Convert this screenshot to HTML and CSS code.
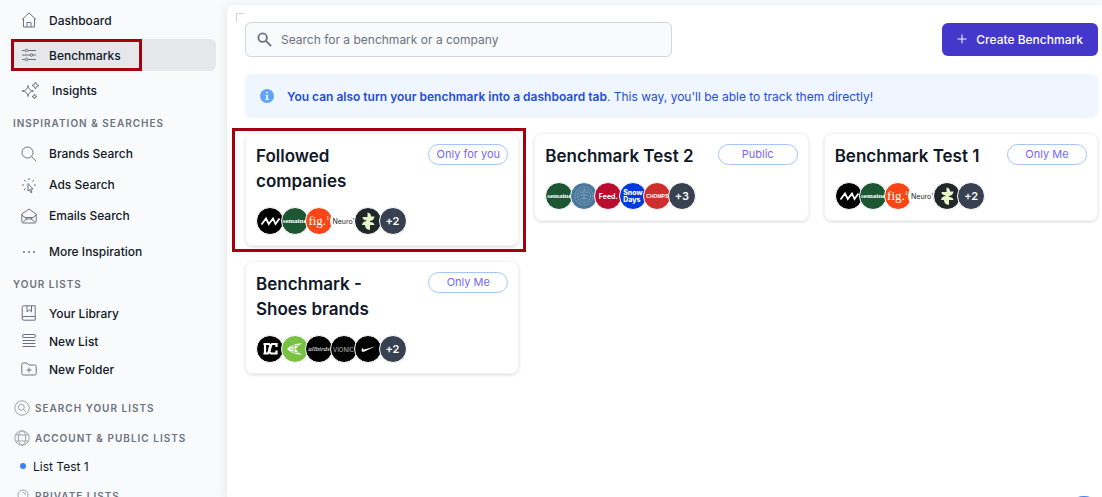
FILE: index.html
```html
<!DOCTYPE html>
<html lang="en">
<head>
  <meta charset="utf-8">
  <title>Benchmarks</title>
  <link rel="stylesheet" href="styles.css">
</head>
<body>
  <!-- shared logos -->
  <svg class="sprite" aria-hidden="true">
    <symbol id="logo-wave" viewBox="0 0 26 26">
      <path d="M4.500 16.500L9 10.500l2.800 5.500 4.200-5.500 2.500 5.500 4-5.500" fill="none" stroke="#fff" stroke-width="1.800"/>
    </symbol>
    <symbol id="logo-leaf" viewBox="0 0 26 26">
      <path d="M7.500 9h5V4.500q3.500.5 3.500 4h3.500q-.5 4-4.500 4.500v1q4 0 4.500 3H15V22q-5-.5-5-5H7q.5-3.500 4.500-4v-.5q-4-.5-4-3.500z" fill="#e6f5c9"/>
    </symbol>
  </svg>

  <div class="app">
    <nav class="sidebar">
      <div class="nav-group main-nav">
        <a href="#" class="nav-item">
          <svg class="icon" viewBox="0 0 16 16"><path d="M1 7.500L8 1l7 6.500M2.500 6.500V15h11V6.500M6 15v-4.500h4V15"/></svg>
          Dashboard
        </a>
        <a href="#" class="nav-item active">
          <svg class="icon" viewBox="0 0 16 16"><path d="M1 3.500h3M7 3.500h8M1 8h8M12 8h3M1 12.500h3M7 12.500h8"/><circle cx="5.500" cy="3.500" r="1.300"/><circle cx="10.500" cy="8" r="1.300"/><circle cx="5.500" cy="12.500" r="1.300"/></svg>
          Benchmarks
          <span class="marker"></span>
        </a>
        <a href="#" class="nav-item">
          <svg class="icon icon-wide" viewBox="0 0 19 19"><path d="M7 4.500Q7.500 9.500 12.500 10 7.500 10.500 7 15.500 6.500 10.500 1 10 6.500 9.500 7 4.500zM14.500 1q.3 3 3.500 3.500-3.200.5-3.500 3.500-.3-3-3.500-3.500 3.200-.5 3.500-3.500zM13.500 13q.2 2.300 2.500 2.500-2.300.2-2.500 2.500-.2-2.300-2.500-2.500 2.300-.2 2.500-2.500z"/></svg>
          Insights
        </a>
      </div>

      <h2 class="nav-title">Inspiration &amp; Searches</h2>
      <div class="nav-group medium">
        <a href="#" class="nav-item">
          <svg class="icon" viewBox="0 0 16 16"><circle cx="6.500" cy="6.500" r="5.500"/><path d="M10.500 10.500L15 15"/></svg>
          Brands Search
        </a>
        <a href="#" class="nav-item">
          <svg class="icon" viewBox="0 0 16 16"><path d="M8 1v2M3 3l1.500 1.500M13 3l-1.500 1.500M1 8h2M13 8h2M4.500 11.500L3 13M7 6.500l5 5.500-2.300.2 1.300 3-1.300.5-1.200-3L7 14z"/></svg>
          Ads Search
        </a>
        <a href="#" class="nav-item">
          <svg class="icon" viewBox="0 0 16 16"><path d="M.8 6L8 1l7.200 5v7.500q0 1.500-1.500 1.500H2.300Q.8 15 .8 13.500zM.8 7L6 11h4l5.200-4M6 11l-4 3M10 11l4 3M4 9.500h8"/></svg>
          Emails Search
        </a>
        <a href="#" class="nav-item more">
          <svg class="icon icon-dots" viewBox="0 0 16 16"><circle cx="3" cy="8" r="1"/><circle cx="8" cy="8" r="1"/><circle cx="13" cy="8" r="1"/></svg>
          More Inspiration
        </a>
      </div>

      <h2 class="nav-title">Your Lists</h2>
      <div class="nav-group compact">
        <a href="#" class="nav-item">
          <svg class="icon" viewBox="0 0 16 16"><path d="M3 .8h11.200v14.400H3q-1.800 0-1.800-1.700V2.500Q1.200.8 3 .8zM1.200 13.500Q1.200 11.500 3 11.500h11.200M6 .8v6l2.300-2 2.200 2v-6"/></svg>
          Your Library
        </a>
        <a href="#" class="nav-item">
          <svg class="icon" viewBox="0 0 16 16"><rect x="1.500" y="1.500" width="13" height="3" rx="1.500"/><path d="M1.500 7.500h13M1.500 10.500h13M1.500 13.500h13"/></svg>
          New List
        </a>
        <a href="#" class="nav-item">
          <svg class="icon" viewBox="0 0 16 16"><path d="M.8 3.500Q.8 2 2.300 2h3.500l2 2h5.900q1.500 0 1.500 1.500v7q0 1.500-1.500 1.500H2.300Q.8 14 .8 12.500zM8 6.500v5M5.500 9h5"/></svg>
          New Folder
        </a>
      </div>

      <div class="lists">
        <h2 class="list-title">
          <svg class="icon" viewBox="0 0 16 16"><circle cx="8" cy="8" r="7.200"/><circle cx="7.300" cy="7.300" r="3"/><path d="M9.500 9.500l2.500 2.500"/></svg>
          Search your lists
        </h2>
        <h2 class="list-title">
          <svg class="icon" viewBox="0 0 16 16"><circle cx="8" cy="8" r="7.200"/><ellipse cx="8" cy="8" rx="3.700" ry="7.200"/><path d="M1.500 5h13M1.500 11h13"/></svg>
          Account &amp; public lists
        </h2>
        <a href="#" class="list-link">List Test 1</a>
        <h2 class="list-title">
          <svg class="icon" viewBox="0 0 16 16"><circle cx="9" cy="7" r="5"/><path d="M9 4.500a2.500 2.500 0 0 1 2.500 2.500M5 11l-3 4"/></svg>
          Private lists
        </h2>
      </div>
    </nav>

    <main class="content">
      <span class="corner"></span>
      <div class="toolbar">
        <label class="search">
          <svg viewBox="0 0 16 16"><circle cx="6" cy="6" r="4.500"/><path d="M9.500 9.500L15 15"/></svg>
          <input type="text" placeholder="Search for a benchmark or a company" aria-label="Search for a benchmark or a company">
        </label>
        <button class="create">
          <svg viewBox="0 0 10 10"><path d="M5 .5v9M.5 5h9"/></svg>
          Create Benchmark
        </button>
      </div>

      <div class="notice">
        <svg viewBox="0 0 14 14"><circle cx="7" cy="7" r="7" fill="#60a5fa"/><path d="M6.200 3h1.800v1.600H6.200zM5.500 6H8v4h1v1H5.200v-1h1V7h-.7z" fill="#eff6ff"/></svg>
        <p><strong>You can also turn your benchmark into a dashboard tab</strong>. This way, you'll be able to track them directly!</p>
      </div>

      <div class="cards">
        <article class="card">
          <div class="card-head">
            <h3>Followed companies</h3>
            <span class="badge">Only for you</span>
          </div>
          <div class="brands">
            <span class="brand black"><svg><use href="#logo-wave"/></svg></span>
            <span class="brand semaine">semaine</span>
            <span class="brand fig">fig.<sup>1</sup></span>
            <span class="brand neuro">Neuro'</span>
            <span class="brand leaf"><svg><use href="#logo-leaf"/></svg></span>
            <span class="brand count">+2</span>
          </div>
          <span class="marker"></span>
        </article>

        <article class="card">
          <div class="card-head">
            <h3>Benchmark Test 2</h3>
            <span class="badge">Public</span>
          </div>
          <div class="brands">
            <span class="brand semaine">semaine</span>
            <span class="brand seal"><svg viewBox="0 0 26 26"><g fill="none" stroke="#a9c3d8"><circle cx="13" cy="13" r="9" stroke-width=".7" stroke-dasharray="1.500 1"/><circle cx="13" cy="13" r="6.500" stroke-width=".7" stroke-dasharray="2 1"/><path d="M9 10q4-3 8 0M8 13q5-3 10 0M9 16q4-3 8 0M13 8v10" stroke-width=".5"/></g></svg></span>
            <span class="brand feed">Feed.</span>
            <span class="brand snow">Snow<br>Days</span>
            <span class="brand chomps">CHOMPS</span>
            <span class="brand count">+3</span>
          </div>
        </article>

        <article class="card">
          <div class="card-head">
            <h3>Benchmark Test 1</h3>
            <span class="badge">Only Me</span>
          </div>
          <div class="brands">
            <span class="brand black"><svg><use href="#logo-wave"/></svg></span>
            <span class="brand semaine">semaine</span>
            <span class="brand fig">fig.<sup>1</sup></span>
            <span class="brand neuro">Neuro'</span>
            <span class="brand leaf"><svg><use href="#logo-leaf"/></svg></span>
            <span class="brand count">+2</span>
          </div>
        </article>

        <article class="card">
          <div class="card-head">
            <h3>Benchmark - Shoes brands</h3>
            <span class="badge">Only Me</span>
          </div>
          <div class="brands">
            <span class="brand black"><svg viewBox="0 0 26 26"><g fill="none" stroke="#fff" stroke-width="2.200"><path d="M6.500 8h5.500l1.500 1.500v2L11 17.500H6.500M8 8v9"/><path d="M19.500 11V8h-4.500L12.500 12v4l1.500 1.500h5.500v-3"/></g></svg></span>
            <span class="brand green"><svg viewBox="0 0 26 26"><path d="M5 13Q11 7 20 7.500 15 10 14 13q1 3 6 5.500Q11 19 5 13z" fill="#fff"/><path d="M8 13h7M9 10.500l8-1.500M9 15.500l8 1.500M12 8v10" stroke="#78c143" stroke-width=".8"/></svg></span>
            <span class="brand black allbirds">allbirds</span>
            <span class="brand black vionic">VIONIC</span>
            <span class="brand black"><svg viewBox="0 0 26 26"><path d="M20 10.500L10 15.300q-3.500 1.500-3.500-1 0-1.200 1.200-2.500-.2 2.200 2.300 1.500z" fill="#fff"/></svg></span>
            <span class="brand count">+2</span>
          </div>
        </article>
      </div>
    </main>
  </div>

  <button class="chat" aria-label="Open chat"></button>
</body>
</html>
```

FILE: styles.css
```css
* {
  box-sizing: border-box;
}

body {
  margin: 0;
  font-family: Inter, "Liberation Sans", sans-serif;
  font-size: 12px;
  color: #111827;
  background: #f9fafc;
}

h2, h3, p {
  margin: 0;
}

a {
  color: inherit;
  text-decoration: none;
}

.sprite {
  display: none;
}

.app {
  display: grid;
  grid-template-columns: 227px 1fr;
  height: 100vh;
  overflow: hidden;
}

/* sidebar */
.sidebar {
  padding: 4px 11px 0 13px;
  overflow: hidden;
}

.nav-group {
  display: flex;
  flex-direction: column;
}

.main-nav {
  gap: 3px;
}

.nav-item {
  position: relative;
  display: flex;
  align-items: center;
  gap: 12px;
  height: 32px;
  padding: 0 8px;
  border-radius: 6px;
  font-weight: 500;
}

.medium .nav-item {
  height: 31px;
}

.compact .nav-item {
  height: 28px;
}

.nav-item.active {
  background: #e5e7eb;
}

.nav-item.more {
  margin-top: 5px;
}

.icon {
  width: 16px;
  height: 16px;
  flex: none;
  fill: none;
  stroke: #6b7280;
}

.icon-wide {
  width: 19px;
  height: 19px;
}

.icon-dots {
  fill: #6b7280;
  stroke: none;
}

.nav-title, .list-title {
  font-size: 10px;
  font-weight: 600;
  letter-spacing: 1px;
  line-height: 16px;
  text-transform: uppercase;
  color: #6b7280;
}

.nav-title {
  margin: 9px 0 7px;
}

.lists {
  padding: 10px 0 0 1px;
}

.list-title {
  display: flex;
  align-items: center;
  gap: 5px;
  height: 30px;
}

.list-title .icon {
  stroke: #9ca3af;
}

.list-link {
  display: flex;
  align-items: center;
  gap: 7px;
  height: 26px;
  margin-bottom: 2px;
  padding-left: 6px;
}

.list-link::before {
  content: "";
  width: 6px;
  height: 6px;
  border-radius: 50%;
  background: #3b82f6;
}

.marker {
  position: absolute;
  border: 3px solid #a50010;
  pointer-events: none;
}

.nav-item .marker {
  top: 0;
  left: -2px;
  width: 131px;
  height: 32px;
}

/* content */
.content {
  position: relative;
  margin-top: 5px;
  padding: 17px 4px 0 18px;
  background: #fff;
  border-top-left-radius: 8px;
  box-shadow: 0 2px 12px rgba(0, 0, 0, 0.1);
}

.corner {
  position: absolute;
  top: 8px;
  left: 9px;
  width: 9px;
  height: 9px;
  border-top: 1px solid #d1d5db;
  border-left: 1px solid #d1d5db;
}

.toolbar {
  display: flex;
  justify-content: space-between;
  align-items: center;
}

.search {
  display: flex;
  align-items: center;
  gap: 9px;
  width: 50%;
  height: 35px;
  padding: 0 11px;
  border: 1px solid #d1d5db;
  border-radius: 6px;
  background: #f9fafb;
}

.search svg {
  width: 15px;
  height: 15px;
  fill: none;
  stroke: #6b7280;
  stroke-width: 2;
}

.search input {
  flex: 1;
  padding: 0 0 1px;
  border: none;
  outline: none;
  background: none;
  font: inherit;
}

.search input::placeholder {
  color: #6b7280;
}

.create {
  display: flex;
  align-items: center;
  gap: 9px;
  height: 33px;
  padding: 0 15px 1px;
  border: none;
  border-radius: 6px;
  background: #4338ca;
  color: #fff;
  font: inherit;
  font-weight: 500;
  cursor: pointer;
}

.create svg {
  width: 10px;
  height: 10px;
  stroke: #fff;
}

.notice {
  display: flex;
  align-items: center;
  gap: 13px;
  height: 44px;
  margin: 17px 0 15px;
  padding: 0 15px;
  border-radius: 6px;
  background: #eff6ff;
  color: #1d4ed8;
}

.notice svg {
  width: 14px;
  height: 14px;
}

.notice strong {
  font-weight: 600;
}

.cards {
  display: grid;
  grid-template-columns: repeat(3, 1fr);
  align-items: start;
  gap: 15px;
}

.card {
  position: relative;
  padding: 10px;
  border: 1px solid #f3f4f6;
  border-radius: 8px;
  box-shadow: 0 1px 3px rgba(0, 0, 0, 0.15);
}

.card .marker {
  top: -6px;
  left: -14px;
  right: -8px;
  bottom: -7px;
}

.card-head {
  display: flex;
  justify-content: space-between;
  align-items: flex-start;
  gap: 20px;
}

.card h3 {
  font-size: 17px;
  font-weight: 600;
  line-height: 25px;
}

.badge {
  flex: none;
  width: 80px;
  border: 1px solid #a4c4fb;
  border-radius: 11px;
  font-size: 11px;
  line-height: 19px;
  text-align: center;
  color: #7468fa;
}

/* company logos, each one overlaps the one before */
.brands {
  display: grid;
  grid-template-columns: repeat(6, minmax(0, 1fr));
  width: 147px;
  margin-top: 13px;
}

.brand {
  display: flex;
  align-items: center;
  justify-content: center;
  width: 28px;
  height: 28px;
  border: 1px solid #fff;
  border-radius: 50%;
  overflow: hidden;
  color: #fff;
  white-space: nowrap;
}

.brand svg {
  width: 26px;
  height: 26px;
  flex: none;
}

.black {
  background: #000;
}

.semaine {
  background: #1d5632;
  font: bold 7px "Liberation Serif", serif;
}

.fig {
  background: #fa4616;
  font: 13px "Liberation Serif", serif;
}

.fig sup {
  font-size: 7px;
  line-height: 14px;
  align-self: flex-start;
  padding-top: 3px;
}

.neuro {
  background: #fff;
  color: #222;
  font-size: 7px;
}

.leaf {
  background: #22272a;
}

.seal {
  background: #4a779c;
}

.feed {
  background: #ba0c2f;
  font-size: 7px;
  font-weight: 700;
}

.snow {
  background: #003adb;
  font-size: 7px;
  font-weight: 800;
  line-height: 7px;
}

.chomps {
  background: #cf2e2e;
  font: bold 5px "Liberation Sans", sans-serif;
}

.green {
  background: #78c143;
}

.allbirds {
  font: italic 7px "Liberation Serif", serif;
}

.vionic {
  font-size: 6px;
  color: #bbb;
}

.count {
  background: #374151;
  font-size: 11px;
  font-weight: 600;
}

.chat {
  position: fixed;
  right: 0;
  bottom: -35px;
  width: 36px;
  height: 36px;
  padding: 0;
  border: none;
  border-radius: 50%;
  background: #3b82f6;
}
```
